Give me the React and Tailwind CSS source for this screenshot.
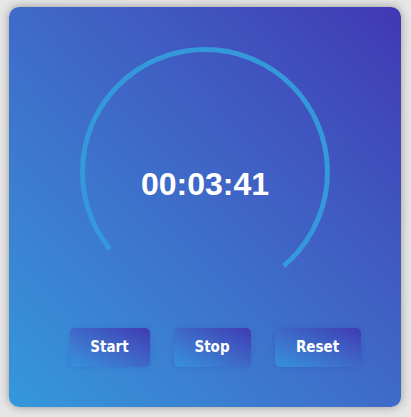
import React from "react";

export default function App() {
  const buttons = [
    { label: "Start", w: "w-[80px]" },
    { label: "Stop", w: "w-[77px]" },
    { label: "Reset", w: "w-[86px]" },
  ];

  return (
    <div className="min-h-screen bg-[#e6e6e6] pt-[7px] pl-[9px]">
      <div className="w-[392px] h-[400px] rounded-[10px] bg-linear-to-tr from-[#3498db] to-[#4038b4] shadow-[0_0_10px_rgba(0,0,0,0.35)] pt-[37px] flex flex-col items-center">
        <div className="relative w-[256px] h-[256px]">
          <svg width="256" height="256" viewBox="0 0 256 256">
            <path
              d="M 32.8 205.1 A 122.5 122.5 0 1 1 206.7 221.8"
              fill="none"
              stroke="#3498db"
              strokeWidth="5"
            />
          </svg>
          <div
            className="absolute left-0 right-0 top-[122px] text-center text-white font-bold text-[32px] leading-[37px]"
            style={{ fontFamily: '"Liberation Sans", Arial, sans-serif' }}
          >
            00:03:41
          </div>
        </div>

        <div className="mt-[28px] pl-5 flex justify-center gap-6">
          {buttons.map((b) => (
            <button
              key={b.label}
              className={`${b.w} h-[39px] rounded-[5px] bg-linear-to-tr from-[#3592dc] to-[#3f3ab3] text-white font-bold text-[15px] shadow-[0_0_4px_rgba(40,60,160,0.25)]`}
              style={{ fontFamily: '"DejaVu Sans Condensed", "DejaVu Sans", Verdana, sans-serif', fontStretch: "condensed" }}
            >
              {b.label}
            </button>
          ))}
        </div>
      </div>
    </div>
  );
}
